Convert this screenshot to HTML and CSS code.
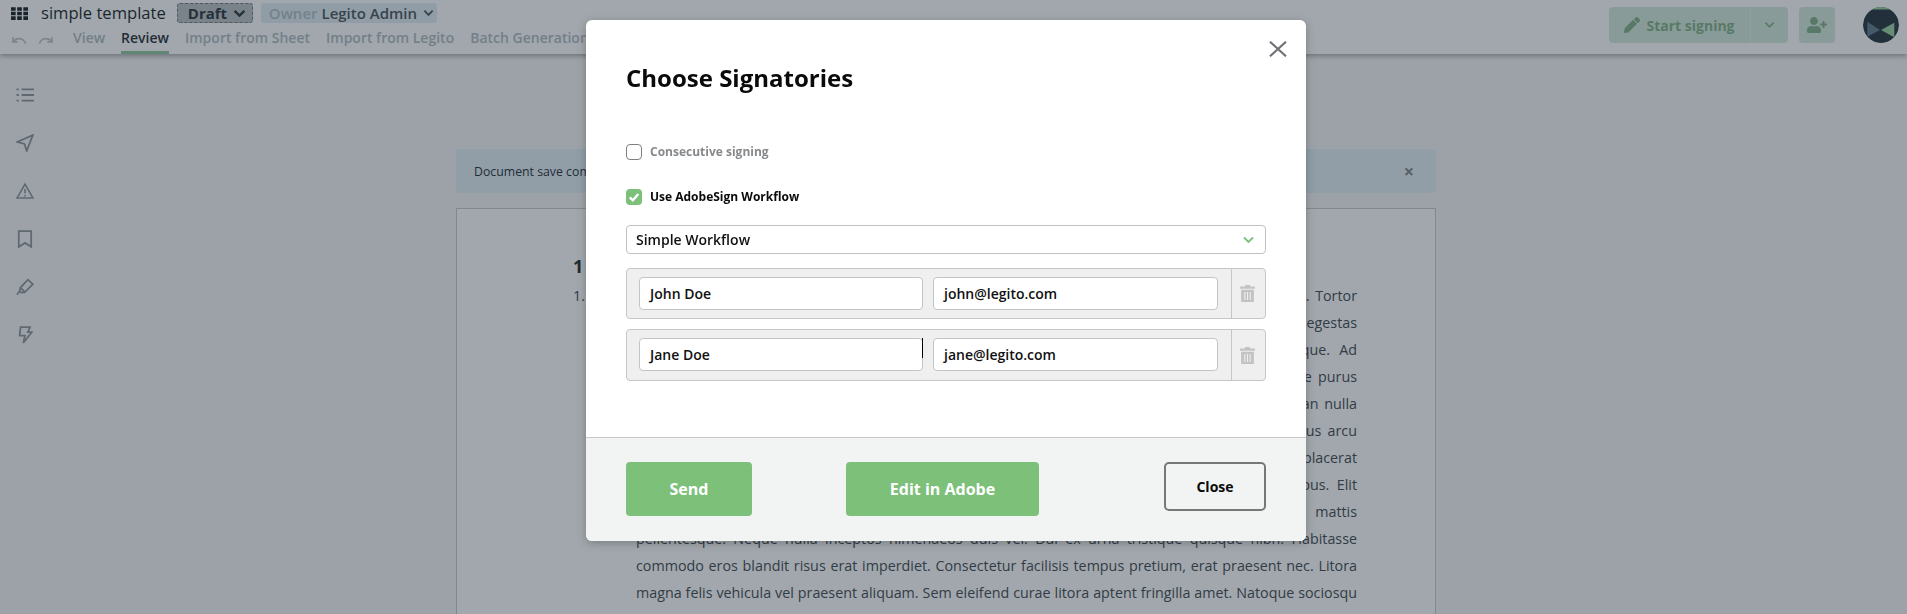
FILE: index.html
```html
<!DOCTYPE html>
<html lang="en">
<head>
<meta charset="utf-8">
<title>Choose Signatories</title>
<link rel="stylesheet" href="styles.css">
</head>
<body>
<header class="topbar">
  <div class="topbar-left">
    <div class="title-row">
      <svg class="apps" viewBox="0 0 16 12"><path d="M0 0h4.400v3.400H0zM5.800 0h4.400v3.400H5.800zM11.600 0H16v3.400h-4.400zM0 4.300h4.400v3.400H0zM5.800 4.300h4.400v3.400H5.800zM11.600 4.300H16v3.400h-4.400zM0 8.600h4.400V12H0zM5.800 8.600h4.400V12H5.800zM11.600 8.600H16V12h-4.400z"/></svg>
      <span class="doc-title">simple template</span>
      <span class="pill pill-draft">Draft
        <svg class="chev" viewBox="0 0 12 8"><path d="M1.500 1.500 6 6l4.500-4.500"/></svg>
      </span>
      <span class="pill pill-owner"><span class="owner-label">Owner</span> Legito Admin
        <svg class="chev chev-small" viewBox="0 0 12 8"><path d="M1.500 1.500 6 6l4.500-4.500"/></svg>
      </span>
    </div>
    <nav class="tab-row">
      <svg class="hist" viewBox="0 0 16 10"><path d="M1 1v5h5M1.500 5.600C3 3.300 5 2.400 7.300 2.400c3.400 0 6 1.900 7.200 5.400"/></svg>
      <svg class="hist hist-redo" viewBox="0 0 16 10"><path d="M15 1v5h-5M14.500 5.600C13 3.300 11 2.400 8.700 2.400c-3.400 0-6 1.900-7.200 5.400"/></svg>
      <a class="tab">View</a>
      <a class="tab tab-active">Review</a>
      <a class="tab">Import from Sheet</a>
      <a class="tab">Import from Legito</a>
      <a class="tab">Batch Generation</a>
    </nav>
  </div>
  <div class="topbar-right">
    <div class="sign-group">
      <button class="sign-main">
        <svg class="pencil" viewBox="0 0 512 512"><path d="M497.900 142.100l-46.100 46.100c-4.700 4.700-12.300 4.700-17 0l-111-111c-4.700-4.700-4.700-12.300 0-17l46.100-46.100c18.700-18.700 49.100-18.700 67.900 0l60.100 60.100c18.800 18.700 18.800 49.100 0 67.900zM284.200 99.800L21.600 362.400.4 483.900c-2.900 16.400 11.400 30.600 27.800 27.800l121.500-21.300 262.600-262.600c4.700-4.700 4.700-12.300 0-17l-111-111c-4.800-4.700-12.400-4.700-17.100 0z"/></svg>
        Start signing
      </button>
      <button class="sign-caret"><svg class="chev-sign" viewBox="0 0 12 8"><path d="M1.500 1.500 6 6l4.500-4.500"/></svg></button>
    </div>
    <button class="add-user">
      <svg class="user-plus" viewBox="0 0 640 512"><path d="M624 208h-64v-64c0-8.800-7.200-16-16-16h-32c-8.800 0-16 7.200-16 16v64h-64c-8.800 0-16 7.200-16 16v32c0 8.800 7.200 16 16 16h64v64c0 8.800 7.200 16 16 16h32c8.800 0 16-7.200 16-16v-64h64c8.800 0 16-7.200 16-16v-32c0-8.800-7.200-16-16-16zm-400 48c70.700 0 128-57.300 128-128S294.700 0 224 0 96 57.300 96 128s57.300 128 128 128zm89.600 32h-16.700c-22.200 10.200-46.900 16-72.900 16s-50.600-5.800-72.900-16h-16.700C60.200 288 0 348.200 0 422.400V464c0 26.500 21.500 48 48 48h352c26.500 0 48-21.500 48-48v-41.600c0-74.200-60.200-134.400-134.400-134.400z"/></svg>
    </button>
    <svg class="avatar" viewBox="0 0 36 36">
      <clipPath id="avatar-clip"><circle cx="18" cy="18" r="18"/></clipPath>
      <g clip-path="url(#avatar-clip)">
        <circle cx="18" cy="18" r="18" class="avatar-bg"/>
        <path class="avatar-right" d="M9 0h18v2.600H9z"/>
        <path class="avatar-left" d="M4.300 14.700v15L17 23z"/>
        <path class="avatar-right" d="M31.300 15.700v14.600L18 23z"/>
      </g>
    </svg>
  </div>
</header>

<div class="workspace">
  <aside class="sidebar">
    <svg class="side-icon" viewBox="0 0 16 16"><path d="M5 3h11M5 8h11M5 13h11M.5 3h2M.5 8h2M.5 13h2"/></svg>
    <svg class="side-icon" viewBox="0 0 16 16"><path d="M15 1 1 7l6.500 1.800L9.500 15z"/></svg>
    <svg class="side-icon" viewBox="0 0 18 16"><path d="M9 1.200 17 15H1zM9 6v4.500M9 12v1.500"/></svg>
    <svg class="side-icon" viewBox="0 0 16 16"><path d="M2.500 1h11v14L8 11.500 2.500 15z"/></svg>
    <svg class="side-icon" viewBox="0 0 16 16"><path d="M10.500 1.500 15 5.500 8 12.500l-4-4zM4 8.500l-.8 3.200 1.500 1.300 3.300-.5M3.200 12 .8 14.700"/></svg>
    <svg class="side-icon" viewBox="0 0 16 16"><path d="M4 1h8.500l-2 4.500h3.500L6.500 15l1.500-6.500H3.300z"/></svg>
  </aside>

  <main class="content">
    <div class="alert">
      <span>Document save completed</span>
      <span class="alert-close">×</span>
    </div>
    <article class="paper">
      <h2 class="section-head">1</h2>
      <div class="clause">
        <span class="clause-num">1.</span>
        <p class="clause-body">Lorem ipsum dolor sit amet consectetur adipiscing elit placerat sociis, aliquet vel nunc justo ante. Tortor<br>
        ultricies nulla primis mollis pharetra sagittis dictum lectus cubilia faucibus nostra fames a nisi egestas<br>
        interdum lacus volutpat per ridiculus scelerisque magna pulvinar class cras viverra at tristique. Ad<br>
        habitant metus rhoncus justo quam dapibus augue ligula sapien velit nisl sed nam tellus congue purus<br>
        ultrices fusce posuere eu potenti laoreet netus lobortis vitae ornare tempor amet ipsum accumsan nulla<br>
        suscipit hendrerit varius enim odio morbi donec gravida feugiat blandit luctus at mi nunc faucibus arcu<br>
        maecenas vestibulum ullamcorper dignissim condimentum pede sed integer a dui mauris ac placerat<br>
        auctor commodo tincidunt proin etiam elementum nam convallis turpis in leo est aenean finibus. Elit<br>
        sollicitudin porttitor lacinia eget tempus vivamus lacus conubia phasellus a dolor et ornare mattis<br>
        pellentesque. Neque nulla inceptos himenaeos duis vel. Dui ex urna tristique quisque nibh. Habitasse<br>
        commodo eros blandit risus erat imperdiet. Consectetur facilisis tempus pretium, erat praesent nec. Litora<br>
        magna felis vehicula vel praesent aliquam. Sem eleifend curae litora aptent fringilla amet. Natoque sociosqu</p>
      </div>
    </article>
  </main>
</div>

<div class="overlay">
  <section class="modal">
    <div class="modal-body">
      <svg class="modal-x" viewBox="0 0 18 16"><path d="M1 .7 17 15.300M17 .7 1 15.300"/></svg>
      <h1 class="modal-title">Choose Signatories</h1>
      <label class="check check-off"><span class="box"></span><span class="check-text">Consecutive signing</span></label>
      <label class="check check-on"><span class="box box-on"><svg viewBox="0 0 16 16"><path d="M3.800 8.300 6.800 11.300 12.300 5"/></svg></span><span class="check-text">Use AdobeSign Workflow</span></label>
      <div class="select">Simple Workflow
        <svg class="select-chev" viewBox="0 0 12 8"><path d="M1.500 1.500 6 6l4.500-4.500"/></svg>
      </div>
      <div class="signer signer-first">
        <div class="signer-fields">
          <div class="field">John Doe</div>
          <div class="field">john@legito.com</div>
        </div>
        <div class="signer-del"><svg class="trash" viewBox="0 0 14 16"><path d="M5 0h4l.7 1.500H14v2H0v-2h4.300zM1 4.500h12V16H1zM4 6.500v7.500h1V6.500zM6.500 6.500v7.500h1V6.500zM9 6.500v7.500h1V6.500z" fill-rule="evenodd"/></svg></div>
      </div>
      <div class="signer signer-second">
        <div class="signer-fields">
          <div class="field field-caret">Jane Doe<span class="caret"></span></div>
          <div class="field">jane@legito.com</div>
        </div>
        <div class="signer-del"><svg class="trash" viewBox="0 0 14 16"><path d="M5 0h4l.7 1.500H14v2H0v-2h4.300zM1 4.500h12V16H1zM4 6.500v7.500h1V6.500zM6.500 6.500v7.500h1V6.500zM9 6.500v7.500h1V6.500z" fill-rule="evenodd"/></svg></div>
      </div>
    </div>
    <footer class="modal-foot">
      <button class="btn btn-send">Send</button>
      <button class="btn btn-edit">Edit in Adobe</button>
      <button class="btn-close">Close</button>
    </footer>
  </section>
</div>
</body>
</html>
```

FILE: styles.css
```css
* { box-sizing: border-box; }
html, body { margin: 0; height: 614px; overflow: hidden; }
body { background: #f7f7f8; font-family: "Open Sans", "Noto Sans", sans-serif; color: #1c242b; }

.topbar { height: 54px; background: #fff; display: flex; justify-content: space-between; box-shadow: 0 2px 5px rgba(0,0,0,.35); position: relative; }
.topbar-left { display: flex; flex-direction: column; }
.title-row { display: flex; align-items: center; height: 26px; padding-left: 11px; }
.apps { width: 17px; height: 13px; fill: #10171c; margin: 1px 13px 0 0; }
.doc-title { font-size: 16.600px; color: #10171c; margin-right: 11px; line-height: 24px; }
.pill { height: 20px; border-radius: 3px; font-size: 15px; font-weight: 600; display: flex; align-items: center; gap: 6px; line-height: 20px; }
.pill-draft { width: 76px; background: #b9bec2; border: 1px dashed #6e7478; padding-left: 10px; margin-right: 8px; color: #222c33; font-weight: 700; }
.pill-owner { width: 176px; background: #e3edf5; padding-left: 8px; color: #434d54; }
.owner-label { color: #aebbc3; margin-right: -2px; }
.chev { width: 13px; height: 9px; fill: none; stroke: #222c33; stroke-width: 2.200; }
.chev-small { width: 11px; height: 8px; stroke: #434d54; stroke-width: 2; }

.tab-row { display: flex; align-items: stretch; height: 28px; padding-left: 12px; font-size: 14px; }
.hist { width: 15px; height: 10px; fill: none; stroke: #bcc4ca; stroke-width: 1.800; margin-top: 10px; margin-right: 11px; }
.hist-redo { margin-right: 20px; }
.tab { color: #aeb8bf; font-weight: 600; margin-right: 16px; padding-top: 2px; border-bottom: 3px solid transparent; white-space: nowrap; }
.tab-active { color: #1c242b; border-bottom-color: #8cc79a; }

.topbar-right { display: flex; align-items: flex-start; padding: 7px 8px 0 0; }
.sign-group { display: flex; height: 36px; border-radius: 4px; overflow: hidden; background: #d4eadb; margin-right: 11px; }
.sign-main, .sign-caret, .add-user { border: 0; background: transparent; padding: 0; display: flex; align-items: center; justify-content: center; font-family: inherit; }
.sign-main { width: 142px; gap: 6px; font-size: 14px; font-weight: 700; color: #7eae84; border-right: 1px solid #e2f1e5; }
.sign-caret { width: 37px; }
.pencil { width: 16px; height: 16px; fill: #7eae84; }
.chev-sign { width: 11px; height: 8px; fill: none; stroke: #7eae84; stroke-width: 1.800; }
.add-user { width: 36px; height: 36px; border-radius: 4px; background: #d4eadb; margin-right: 28px; }
.user-plus { width: 20px; height: 16px; fill: #7eae84; }
.avatar { width: 36px; height: 36px; }
.avatar-bg { fill: #1d2c36; }
.avatar-left { fill: #5c7688; }
.avatar-right { fill: #9ad09f; }

.workspace { display: flex; }
.sidebar { width: 456px; flex: none; display: flex; flex-direction: column; gap: 30px; padding: 32px 0 0 16px; }
.side-icon { width: 18px; height: 18px; fill: none; stroke: #8c9196; stroke-width: 1.600; display: block; }

.content { width: 980px; flex: none; padding-top: 95px; }
.alert { height: 44px; background: #e2eff8; border-radius: 3px; display: flex; align-items: center; justify-content: space-between; padding: 0 22px 0 18px; font-size: 12.300px; margin-bottom: 15px; }
.alert-close { font-size: 18px; font-weight: 700; color: #7b8288; line-height: 1; }
.paper { background: #fff; border: 1px solid #c4c8cc; height: 420px; padding: 45px 78px 0 116px; }
.section-head { font-size: 18px; line-height: 24px; margin: 0 0 4px; font-weight: 700; }
.clause { display: flex; font-size: 14.300px; line-height: 27px; color: #3a4149; }
.clause-num { width: 63px; flex: none; }
.clause-body { flex: 1; margin: 0; text-align: justify; text-align-last: justify; }

.overlay { position: fixed; inset: 0; background: rgba(40,55,66,.44); }
.modal { position: absolute; left: 586px; top: 20px; width: 720px; height: 521px; background: #fff; border-radius: 6px; overflow: hidden; display: flex; flex-direction: column; box-shadow: 0 2px 10px rgba(0,0,0,.25); }
.modal-body { flex: 1; padding: 40px 40px 0 40px; position: relative; }
.modal-x { position: absolute; left: 683px; top: 21px; width: 18px; height: 16px; fill: none; stroke: #6e7276; stroke-width: 2.100; }
.modal-title { margin: 0 0 47px; font-size: 24px; line-height: 36px; font-weight: 700; color: #0a0a0a; }
.check { display: flex; align-items: center; gap: 9px; font-size: 12px; font-weight: 700; height: 18px; }
.check-text { margin: -2px 0 0 -1px; }
.check-off { color: #86898c; margin-bottom: 27px; }
.check-on { color: #0a0a0a; margin-bottom: 19px; }
.box { width: 16px; height: 16px; border: 1px solid #808080; border-radius: 4px; background: #fff; flex: none; }
.box-on { background: #7cc07a; border: 0; }
.box-on svg { display: block; width: 16px; height: 16px; fill: none; stroke: #fff; stroke-width: 2.400; }
.select { height: 29px; border: 1px solid #bfc1c2; border-radius: 4px; display: flex; align-items: center; justify-content: space-between; padding: 0 10px 0 9px; font-size: 14px; font-weight: 600; color: #111; margin-bottom: 14px; }
.select-chev { width: 13px; height: 8px; fill: none; stroke: #7cc07a; stroke-width: 1.800; }
.signer { display: flex; border: 1px solid #c4c6c7; border-radius: 4px; background: #efefef; }
.signer-first { height: 51px; margin-bottom: 10px; }
.signer-second { height: 52px; }
.signer-fields { flex: 1; display: flex; gap: 10px; padding: 8px 0 0 12px; }
.field { height: 33px; border: 1px solid #c2c4c5; border-radius: 4px; background: #fff; padding-left: 10px; line-height: 31px; font-size: 14px; font-weight: 600; color: #111; }
.field:first-child { width: 284px; }
.field:last-child { width: 285px; }
.field-caret { position: relative; }
.caret { position: absolute; right: -1px; top: -1px; width: 1px; height: 20px; background: #000; }
.signer-del { width: 34px; flex: none; border-left: 1px solid #c4c6c7; display: flex; align-items: center; justify-content: center; padding-right: 3px; }
.trash { width: 15px; height: 17px; fill: #c2c3c4; }

.modal-foot { height: 104px; flex: none; background: #f2f4f3; border-top: 1px solid #c8caca; display: flex; align-items: flex-start; padding: 24px 40px 0 40px; }
.btn { height: 54px; border: 0; border-radius: 4px; background: #7cc07a; color: #fff; font-family: inherit; font-size: 16px; font-weight: 700; }
.btn-send { width: 126px; }
.btn-edit { width: 193px; margin-left: 94px; }
.btn-close { width: 102px; height: 49px; margin-left: auto; background: transparent; border: 2px solid #777; border-radius: 5px; color: #0a0a0a; font-family: inherit; font-size: 14px; font-weight: 700; }
```
